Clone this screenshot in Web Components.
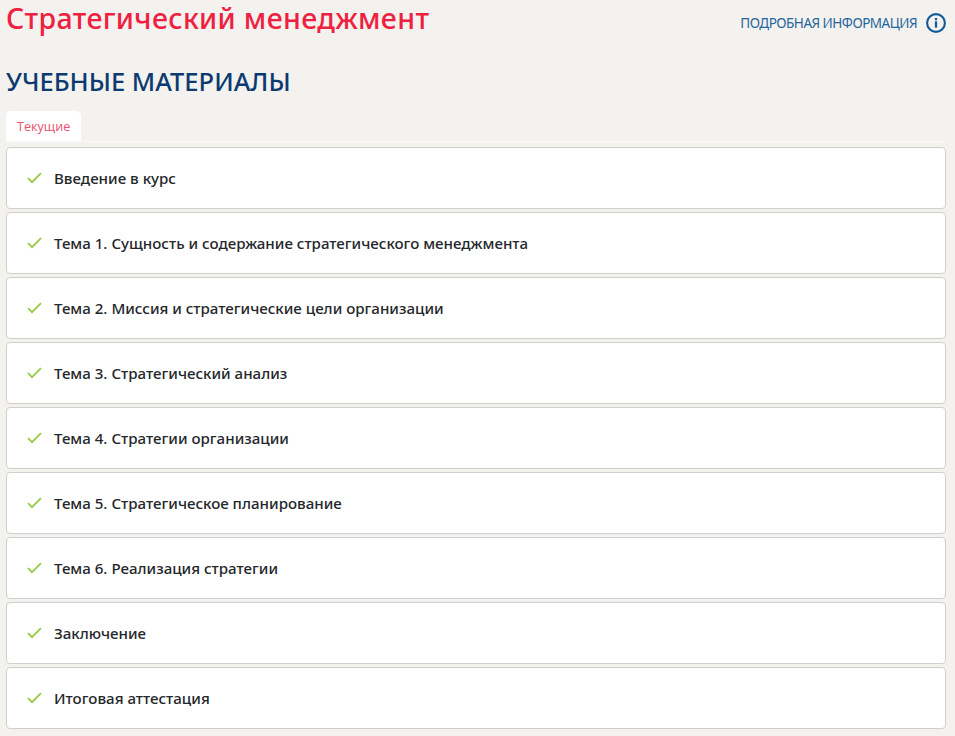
<!DOCTYPE html>
<html lang="ru"><head><meta charset="utf-8"><title>Учебные материалы</title>
<style>
html,body{margin:0;padding:0;background:#f3f2ef;height:736px;overflow:hidden}
</style></head><body>
<course-page></course-page>
<script>
class CourseHeader extends HTMLElement{constructor(){super();this.attachShadow({mode:'open'}).innerHTML=`<style>
:host{display:flex;justify-content:space-between;align-items:flex-start;height:63px}
h1{margin:0;font:500 28.5px/36px "Noto Sans",sans-serif;color:#ee2140;letter-spacing:.35px}
a{display:flex;align-items:center;gap:9px;margin:12px 0 0 0;font:400 13.5px/22px "Noto Sans",sans-serif;color:#27659c;letter-spacing:-.5px}
svg{display:block}
</style><h1><slot></slot></h1><a>ПОДРОБНАЯ ИНФОРМАЦИЯ<svg width="20" height="20" viewBox="0 0 20 20"><circle cx="10" cy="10" r="8.9" fill="none" stroke="#0f5a96" stroke-width="2.1"/><rect x="8.9" y="8.3" width="2.2" height="6.4" fill="#0f5a96"/><rect x="8.9" y="5" width="2.2" height="2.2" fill="#0f5a96"/></svg></a>`}}
class SectionTitle extends HTMLElement{constructor(){super();this.attachShadow({mode:'open'}).innerHTML=`<style>
:host{display:block;font:500 25.5px/36px "Noto Sans",sans-serif;color:#0d3a70;height:48px}
</style><slot></slot>`}}
class TabBar extends HTMLElement{constructor(){super();this.attachShadow({mode:'open'}).innerHTML=`<style>
:host{display:block;border-bottom:1px solid #fafafa;height:30px}
div{display:inline-block;box-sizing:border-box;height:30px;padding:0 11px;background:#fff;border-radius:5px 5px 0 0;font:400 12.6px/31px "Open Sans",sans-serif;color:#e9506f}
</style><div><slot></slot></div>`}}
class LessonRow extends HTMLElement{constructor(){super();this.attachShadow({mode:'open'}).innerHTML=`<style>
:host{display:flex;align-items:center;box-sizing:border-box;height:62px;background:#fff;border:1px solid #cfcfcd;border-radius:4px;padding:0 0 0 20px;gap:12px;font:500 15.1px/20px "Noto Sans",sans-serif;color:#24272b}
svg{display:block;flex:none;margin-top:-1px}
</style><svg width="15" height="12" viewBox="0 0 15 12"><path d="M1 6.2 5 10.2 14 1.2" fill="none" stroke="#97cb45" stroke-width="1.8"/></svg><span><slot></slot></span>`}}
class CoursePage extends HTMLElement{constructor(){super();const rows=['Введение в курс','Тема 1. Сущность и содержание стратегического менеджмента','Тема 2. Миссия и стратегические цели организации','Тема 3. Стратегический анализ','Тема 4. Стратегии организации','Тема 5. Стратегическое планирование','Тема 6. Реализация стратегии','Заключение','Итоговая аттестация'];
this.attachShadow({mode:'open'}).innerHTML=`<style>
:host{display:block;padding:0 9px 0 6px}
.list{display:grid;gap:3px;margin-top:5px}
</style><course-header>Стратегический менеджмент</course-header><section-title>УЧЕБНЫЕ МАТЕРИАЛЫ</section-title><tab-bar>Текущие</tab-bar><div class="list">${rows.map(r=>`<lesson-row>${r}</lesson-row>`).join('')}</div>`}}
customElements.define('course-header',CourseHeader);
customElements.define('section-title',SectionTitle);
customElements.define('tab-bar',TabBar);
customElements.define('lesson-row',LessonRow);
customElements.define('course-page',CoursePage);
</script></body></html>
